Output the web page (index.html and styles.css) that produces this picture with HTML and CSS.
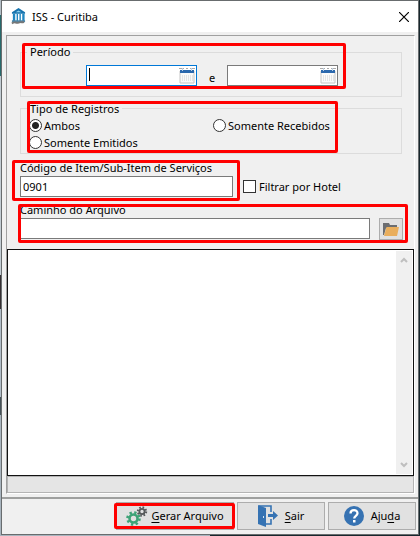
FILE: index.html
```html
<!DOCTYPE html>
<html lang="pt-BR">
<head>
<meta charset="utf-8">
<meta name="viewport" content="width=device-width, initial-scale=1">
<title>ISS - Curitiba</title>
<link rel="stylesheet" href="styles.css">
</head>
<body>
<svg class="defs" aria-hidden="true">
  <symbol id="calendar" viewBox="0 0 16 16">
    <path d="M1 3h14v12H1z" fill="#fafafa" stroke="#c4c4c4"/>
    <path d="M1 2h14v3H1z" fill="#2b68ad"/>
    <path d="M0 .5h5M7 .5h2M11 .5h5" stroke="#aaa"/>
    <path d="M3.500 0v3M12.500 0v3" stroke="#bcd0e4"/>
    <path d="M3.500 7v6M5.500 7v6M7.500 7v6M9.500 7v6M11.500 7v6M13.500 7v6" stroke="#e4e4e4"/>
  </symbol>
</svg>
<div class="window">
  <header class="titlebar">
    <svg class="app-icon" viewBox="0 0 16 18" aria-hidden="true">
      <path d="M8 0 1 4.500V6h14V4.500z" fill="#1874ae"/>
      <path d="M5 4.500 8 2.500l3 2z" fill="#8cd0ee"/>
      <path d="M2 6h2.500v8H2zM6 6h1.500v8H6zM9 6h1.500v8H9zM12 6h2.500v8H12z" fill="#2187c1"/>
      <path d="M1 13h14v2H1z" fill="#4c87aa"/>
      <path d="M1 16.500c3-3 4 0 7-1s3 0 6-.5" fill="none" stroke="#777" stroke-width="2"/>
    </svg>
    <h1 class="title">ISS - Curitiba</h1>
    <button class="close" type="button" aria-label="Fechar">
      <svg viewBox="0 0 10 10" aria-hidden="true"><path d="M0 0 10 10M10 0 0 10" stroke="#000" stroke-width="1.2"/></svg>
    </button>
  </header>

  <main class="panel">
    <div class="form">
      <fieldset class="group period">
        <legend>Período</legend>
        <div class="dates">
          <span class="date-field active"><input type="text" aria-label="Data inicial"><span class="caret"></span><svg class="calendar" aria-hidden="true"><use href="#calendar"/></svg></span>
          <span class="and">e</span>
          <span class="date-field"><input type="text" aria-label="Data final"><svg class="calendar" aria-hidden="true"><use href="#calendar"/></svg></span>
        </div>
        <span class="mark"></span>
      </fieldset>

      <fieldset class="group records">
        <legend>Tipo de Registros</legend>
        <div class="options">
          <label class="choice"><input type="radio" name="tipo" checked>Ambos</label>
          <label class="choice"><input type="radio" name="tipo">Somente Recebidos</label>
          <label class="choice"><input type="radio" name="tipo">Somente Emitidos</label>
        </div>
        <span class="mark"></span>
      </fieldset>

      <div class="field code">
        <label class="label" for="code">Código de Item/Sub-Item de Serviços</label>
        <div class="row">
          <input class="text code-input" id="code" type="text" value="0901">
          <label class="choice hotel"><input type="checkbox">Filtrar por Hotel</label>
        </div>
        <span class="mark"></span>
      </div>

      <div class="field path">
        <label class="label" for="path">Caminho do Arquivo</label>
        <div class="row">
          <input class="text path-input" id="path" type="text">
          <button class="browse" type="button" aria-label="Procurar">
            <svg viewBox="0 0 16 13" aria-hidden="true">
              <path d="M0 0h6l1 2h7v3H3L1 12H0z" fill="#6b6d70"/>
              <path d="M3.500 4H16l-2 9H1z" fill="#e9ae5c"/>
            </svg>
          </button>
        </div>
        <span class="mark"></span>
      </div>
    </div>

    <div class="log">
      <textarea aria-label="Resultado"></textarea>
      <div class="scrollbar">
        <svg viewBox="0 0 8 6" aria-hidden="true"><path d="M1 5 4 2l3 3" fill="none" stroke="#bfbfbf" stroke-width="2"/></svg>
        <svg viewBox="0 0 8 6" aria-hidden="true"><path d="M1 1l3 3 3-3" fill="none" stroke="#bfbfbf" stroke-width="2"/></svg>
      </div>
    </div>
    <div class="status"></div>
  </main>

  <footer class="actions">
    <button class="action generate" type="button">
      <svg class="gears" viewBox="0 0 22 20" aria-hidden="true">
        <circle cx="7.500" cy="12.500" r="4" fill="none" stroke="#3da377" stroke-width="2.600"/>
        <circle cx="7.500" cy="12.500" r="6" fill="none" stroke="#3da377" stroke-width="2.600" stroke-dasharray="2.300 2.412"/>
        <circle cx="16" cy="5.500" r="2.600" fill="none" stroke="#55585a" stroke-width="1.800"/>
        <circle cx="16" cy="5.500" r="4.200" fill="none" stroke="#55585a" stroke-width="2" stroke-dasharray="1.600 1.700"/>
      </svg>
      <span><u>G</u>erar Arquivo</span>
      <span class="mark"></span>
    </button>
    <button class="action leave" type="button">
      <svg class="door" viewBox="0 0 20 22" aria-hidden="true">
        <path d="M1 1h12v6M13 14v5H8" fill="none" stroke="#3673b3" stroke-width="1.600"/>
        <path d="M0 0 8 3v19l-8-3z" fill="#3673b3"/>
        <path d="M10 9h5V6l5 4.500-5 4.500v-3h-5z" fill="#3673b3"/>
        <path d="M5.500 11v2" stroke="#d7e5f2"/>
      </svg>
      <span><u>S</u>air</span>
    </button>
    <button class="action help" type="button">
      <svg class="question" viewBox="0 0 20 20" aria-hidden="true">
        <circle cx="10" cy="10" r="10" fill="#3672b2"/>
        <path d="M6.500 7.500C6.500 3 13.500 3.200 13.500 7.200c0 2.600-3.300 2.700-3.300 5.300" fill="none" stroke="#fff" stroke-width="2.300"/>
        <path d="M9 14h2.500v2.500H9z" fill="#fff"/>
      </svg>
      <span>Aju<u>d</u>a</span>
    </button>
  </footer>
</div>
</body>
</html>
```
FILE: styles.css
```css
* { box-sizing: border-box; }

body {
  margin: 0;
  background: linear-gradient(to right, transparent 50%, #17272d 50%),
    linear-gradient(#b4bec6 15px, #286a6c 15px 76px, #c3cdd4 76px 275px, #342e31 275px 309px, #b1bdc8 309px 397px, #455157 397px 415px, #a8b4be 415px);
  color: #000;
  font: 11px/16px "Noto Sans", "Open Sans", sans-serif;
}

input, button, textarea { font: inherit; color: inherit; margin: 0; }
.defs { position: absolute; width: 0; height: 0; }

.window {
  display: flex;
  flex-direction: column;
  min-height: calc(100vh - 1px);
  margin: 0 1px 1px;
  border: 1px solid #686c6e;
  background: #f0f0f0;
}

.titlebar {
  display: flex;
  align-items: center;
  height: 31px;
  padding: 0 9px;
  background: #fff;
}
.app-icon { width: 15px; height: 17px; }
.title { flex: 1; margin: 0 0 0 6px; font: inherit; }
.close { padding: 0; border: 0; background: none; }
.close svg { display: block; width: 10px; height: 10px; }

.panel {
  display: flex;
  flex: 1;
  flex-direction: column;
  margin: 3px 3px 3px 4px;
  border: 1px solid;
  border-color: #a0a0a0 #fff #fff #a0a0a0;
}
.form { padding: 8px 12px 10px 13px; }

.mark {
  position: absolute;
  border: 3px solid #f00;
  border-radius: 2px;
  pointer-events: none;
}

.group {
  position: relative;
  min-width: 0;
  margin: 0;
  padding: 0 0 0 6px;
  border: 1px solid #dcdcdc;
}
.group legend { padding: 0 3px; }

.period { padding-top: 5px; padding-bottom: 10px; }
.period .mark { inset: -17px 55px 7px 1px; }
.dates { display: flex; align-items: center; padding-left: 59px; }
.and { width: 30px; padding-top: 4px; text-align: center; }
.date-field { position: relative; width: 111px; }
.date-field input {
  display: block;
  width: 100%;
  height: 21px;
  padding: 0 22px 0 2px;
  border: 1px solid #7a7a7a;
  background: #fff;
}
.active input { border-color: #0078d7; }
.caret { position: absolute; left: 3px; top: 3px; width: 1px; height: 13px; background: #000; }
.calendar { position: absolute; right: 2px; top: 3px; width: 16px; height: 16px; }

.records { margin-top: 2px; padding-bottom: 2px; }
.records legend { padding-top: 2px; }
.records .mark { inset: -16px 63px 0 6px; }
.options { display: grid; grid-template-columns: 184px 1fr; padding-left: 2px; }

.choice { display: flex; align-items: center; gap: 2px; height: 17px; white-space: nowrap; }
.choice input {
  flex: none;
  width: 13px;
  height: 13px;
  appearance: none;
  border: 1px solid #333;
  background: #fff;
}
.choice input[type="radio"] { border-radius: 50%; }
.choice input[type="radio"]:checked { background: radial-gradient(circle, #222 3px, #fff 4px); }

.field { position: relative; margin-top: 6px; }
.label { display: block; }
.row { display: flex; }
.text {
  height: 21px;
  padding: 0 2px;
  border: 1px solid #7a7a7a;
  background: #fff;
}
.code-input { width: 213px; }
.hotel { gap: 3px; height: 21px; margin-left: 10px; }
.code .mark { left: -8px; top: 0; width: 228px; height: 41px; }
.path { margin-top: 5px; }
.path-input { flex: 1; min-width: 0; }
.path .mark { inset: 2px -6px -4px -2px; }
.browse {
  display: grid;
  place-items: center;
  width: 24px;
  height: 22px;
  margin: 0 -1px -1px 9px;
  padding: 0;
  border: 1px solid #adadad;
  background: #e1e1e1;
}
.browse svg { width: 16px; height: 13px; }

.log { position: relative; display: flex; flex: 1; min-height: 120px; }
.log textarea {
  flex: 1;
  width: 100%;
  padding: 2px 20px 2px 2px;
  border: 1px solid #111;
  background: #fff;
  resize: none;
}
.scrollbar {
  position: absolute;
  inset: 2px 2px 2px auto;
  display: flex;
  flex-direction: column;
  align-items: center;
  justify-content: space-between;
  width: 16px;
  padding: 6px 0;
  background: #f0f0f0;
}
.scrollbar svg { width: 8px; height: 6px; }
.status { height: 17px; border: 1px solid #b4b4b4; background: #e5e5e5; }

.actions {
  display: flex;
  justify-content: flex-end;
  gap: 3px;
  padding: 3px 2px 4px;
  border-top: 2px solid #9fa09f;
}
.action {
  position: relative;
  display: flex;
  align-items: center;
  justify-content: center;
  gap: 7px;
  width: 88px;
  height: 28px;
  padding: 0;
  border: 1px solid #adadad;
  background: #e1e1e1;
}
.action u { text-underline-offset: 2px; }
.generate { width: 118px; gap: 3px; }
.generate .mark { inset: 0 -2px 0 -3px; }
.gears { width: 22px; height: 20px; }
.door { width: 20px; height: 22px; }
.question { width: 20px; height: 20px; }
```
